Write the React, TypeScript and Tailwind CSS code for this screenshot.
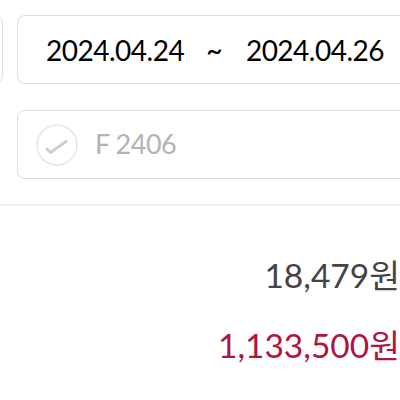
import React from 'react';

function CheckCircle() {
  return (
    <svg width="42" height="42" viewBox="0 0 42 42" className="shrink-0">
      <circle cx="21" cy="21" r="20" fill="none" stroke="#e6e6e6" strokeWidth="1.5" />
      <path d="M11 25 L14.5 28.5 L30 17.5" fill="none" stroke="#cfcfcf" strokeWidth="3" strokeLinecap="round" strokeLinejoin="round" />
    </svg>
  );
}

export default function App() {
  return (
    <div className="w-[400px] h-[400px] overflow-hidden bg-white font-['Lato','Noto_Sans_CJK_KR',sans-serif]">
      <div className="flex gap-[14px] pt-[15px] -ml-[97px]">
        <div className="w-[100px] h-[69px] shrink-0 rounded-lg border-[1.5px] border-[#dcdcdc]" />
        <div className="w-[420px] h-[69px] shrink-0 rounded-lg border-[1.5px] border-[#dcdcdc] flex items-center pl-[28px] text-[28px] tracking-[-0.5px] text-black">
          <span>2024.04.24</span>
          <span className="ml-[22px] mr-[24px] text-[28px] font-medium">~</span>
          <span>2024.04.26</span>
        </div>
      </div>

      <div className="pl-[17px] mt-[26px]">
        <div className="w-[420px] h-[69px] rounded-lg border-[1.5px] border-[#dcdcdc] flex items-center pl-[18px] gap-[17px]">
          <CheckCircle />
          <span className="text-[27px] tracking-[-0.5px] text-[#b4b4b4]">F 2406</span>
        </div>
      </div>

      <div className="mt-[25px] h-[2px] bg-[#efefef]" />

      <div className="flex flex-col items-end">
        <div className="mt-[49px] text-[33.5px] leading-[40px] text-[#444444]">18,479원</div>
        <div className="mt-[30px] text-[33.5px] leading-[40px] text-[#b0143f]">1,133,500원</div>
      </div>
    </div>
  );
}
